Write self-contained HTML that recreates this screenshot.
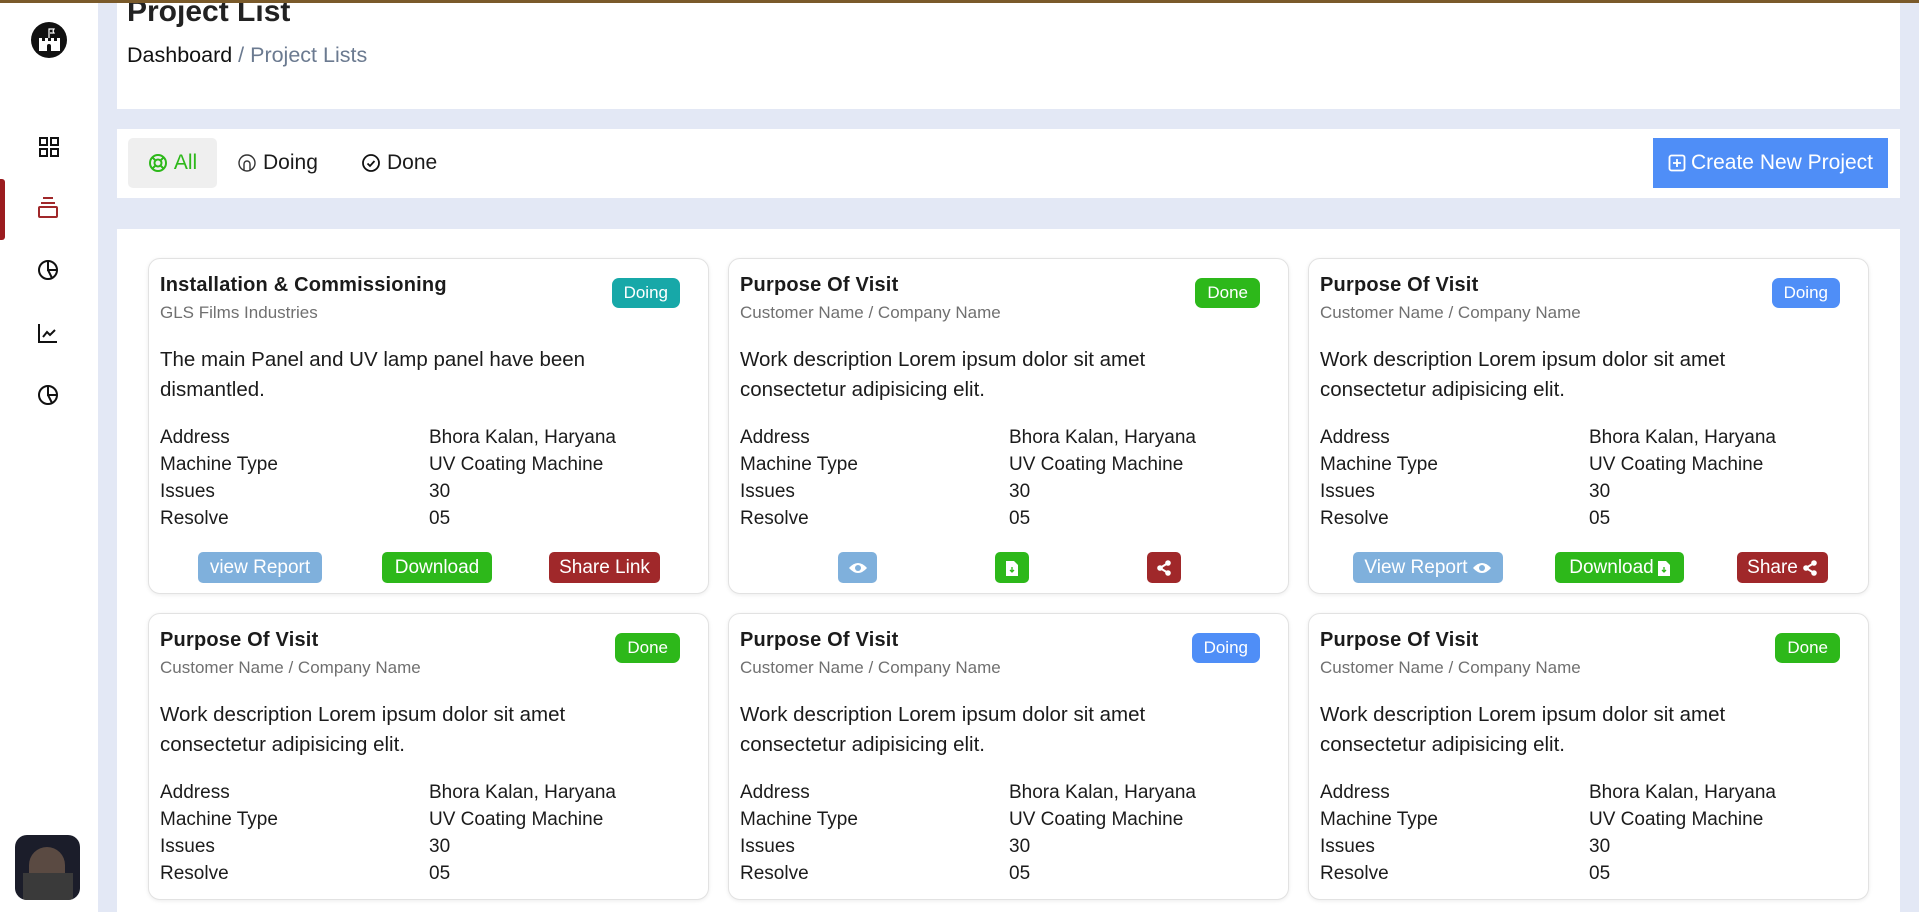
<!DOCTYPE html>
<html><head><meta charset="utf-8">
<style>
*{box-sizing:border-box;margin:0;padding:0}
html{width:1919px;height:912px;overflow:hidden}
body{width:1919px;height:912px;overflow:hidden;background:#e3e8f5;font-family:"Liberation Sans",sans-serif;color:#1b1b1b;position:relative}
.topline{position:absolute;left:0;top:0;width:1919px;height:3px;background:#7a5a2a;z-index:5}
.side{position:absolute;left:0;top:0;width:98px;height:912px;background:#fff}
.side svg{position:absolute}
.hdr{position:absolute;left:117px;top:0;width:1783px;height:109px;background:#fff}
.hdr h1{position:absolute;left:10px;top:-5px;font-size:30px;font-weight:bold;color:#222}
.hdr .bc{position:absolute;left:10px;top:43px;font-size:21.5px;color:#111}
.hdr .bc span{color:#6b7a90}
.flt{position:absolute;left:117px;top:129px;width:1783px;height:69px;background:#fff}
.tab{position:absolute;top:9px;height:50px;display:flex;align-items:center;font-size:21px;gap:6px}
.create{position:absolute;right:12px;top:9px;width:235px;height:50px;background:#4f8ef7;color:#fff;font-size:21px;display:flex;align-items:center;justify-content:center;gap:5px}
.wrap{position:absolute;left:117px;top:229px;width:1783px;height:683px;background:#fff}
.card{position:absolute;width:561px;height:336px;border:1px solid #e2e2e2;border-radius:12px;background:#fff;box-shadow:0 1px 4px rgba(0,0,0,.08)}
.card .t{position:absolute;left:11px;top:15px;font-size:20px;font-weight:bold;color:#1b1b1b;letter-spacing:0.2px}
.card .s{position:absolute;left:11px;top:44px;font-size:17px;color:#707070}
.card .d{position:absolute;left:11px;top:86px;width:500px;font-size:20.5px;line-height:30px;color:#1b1b1b}
.card table{position:absolute;left:11px;top:165px;border-collapse:collapse;font-size:19px}
.card td{height:27px;padding:0}
.card td:first-child{width:269px}
.badge{position:absolute;right:28px;top:19px;height:30px;padding:0 12px;border-radius:7px;color:#fff;font-size:17px;display:flex;align-items:center}
.btn{position:absolute;top:293px;height:31px;border-radius:5px;color:#fff;font-size:19px;display:flex;align-items:center;justify-content:center;gap:4px}
.bl{background:#7fb0dc}.gr{background:#2db81a}.rd{background:#a0282a}.tl{background:#17a8a8}.bu{background:#4f8ef7}
.r2{height:287px}
</style></head><body>
<div class="topline"></div>
<div class="side">
  <svg style="left:30px;top:21px" width="38" height="38" viewBox="0 0 38 38"><circle cx="19" cy="19" r="18" fill="#111"/><path d="M9 30V17h3v3h3v-3h3v3h3v-3h3v3h3v-3h3v13z" fill="#fff"/><path d="M17 30v-5a2 2 0 014 0v5z" fill="#111"/><path d="M19 17V8h5l-1 2 1 2h-4" stroke="#fff" stroke-width="1.2" fill="none"/></svg>
  <svg style="left:38px;top:136px" width="22" height="22" viewBox="0 0 22 22" fill="none" stroke="#111" stroke-width="2"><rect x="2" y="2" width="7" height="7"/><rect x="13" y="2" width="7" height="7"/><rect x="2" y="13" width="7" height="7"/><rect x="13" y="13" width="7" height="7"/></svg>
  <div style="position:absolute;left:0;top:179px;width:5px;height:61px;background:#9b1c1f;border-radius:0 3px 3px 0"></div>
  <svg style="left:37px;top:196px" width="22" height="24" viewBox="0 0 22 24" fill="none" stroke="#a0282a" stroke-width="2"><line x1="6" y1="2" x2="16" y2="2"/><line x1="4" y1="7" x2="18" y2="7"/><rect x="2" y="11" width="18" height="10" rx="1"/></svg>
  <svg style="left:37px;top:259px" width="22" height="22" viewBox="0 0 22 22" fill="none" stroke="#111" stroke-width="2"><circle cx="11" cy="11" r="9"/><path d="M11 2v9h9M11 11l4 8"/></svg>
  <svg style="left:37px;top:322px" width="22" height="22" viewBox="0 0 22 22" fill="none" stroke="#111" stroke-width="2"><path d="M2 2v18h18"/><path d="M6 15l4-5 3 3 5-5"/></svg>
  <svg style="left:37px;top:384px" width="22" height="22" viewBox="0 0 22 22" fill="none" stroke="#111" stroke-width="2"><circle cx="11" cy="11" r="9"/><path d="M11 2v9h9M11 11l4 8"/></svg>
  <div style="position:absolute;left:15px;top:835px;width:65px;height:65px;border-radius:12px;background:#1b1d2a;overflow:hidden"><div style="position:absolute;left:14px;top:12px;width:36px;height:53px;border-radius:18px 18px 4px 4px;background:#5a4a42"></div><div style="position:absolute;left:8px;top:38px;width:50px;height:27px;background:#3a3a3a"></div></div>
</div>
<div class="hdr"><h1>Project List</h1><div class="bc">Dashboard <span>/ Project Lists</span></div></div>
<div class="flt">
  <div class="tab" style="left:11px;width:89px;background:#efefef;border-radius:5px;justify-content:center;color:#2db81a">
    <svg width="20" height="20" viewBox="0 0 20 20" fill="none" stroke="#2db81a" stroke-width="2"><circle cx="10" cy="10" r="8"/><circle cx="10" cy="10" r="3.5"/><path d="M4.5 4.5l3 3M15.5 4.5l-3 3M4.5 15.5l3-3M15.5 15.5l-3-3"/></svg>All</div>
  <div class="tab" style="left:120px"><svg width="20" height="20" viewBox="0 0 20 20" fill="none" stroke="#333" stroke-width="1.4"><circle cx="10" cy="10" r="8"/><path d="M7 17v-6a3 3 0 016 0v6"/></svg>Doing</div>
  <div class="tab" style="left:244px"><svg width="20" height="20" viewBox="0 0 20 20" fill="none" stroke="#111" stroke-width="1.8"><circle cx="10" cy="10" r="8"/><path d="M6.5 10.5l2.5 2.5 4.5-5"/></svg>Done</div>
  <div class="create"><svg width="18" height="18" viewBox="0 0 18 18" fill="none" stroke="#fff" stroke-width="1.8"><rect x="1.5" y="1.5" width="15" height="15" rx="2"/><path d="M9 5v8M5 9h8"/></svg>Create New Project</div>
</div>
<div class="wrap"></div>

<div class="card" style="left:148px;top:258px">
<div class="t">Installation &amp; Commissioning</div><div class="s">GLS Films Industries</div>
<div class="badge tl">Doing</div>
<div class="d">The main Panel and UV lamp panel have been dismantled.</div>
<table><tr><td>Address</td><td>Bhora Kalan, Haryana</td></tr><tr><td>Machine Type</td><td>UV Coating Machine</td></tr><tr><td>Issues</td><td>30</td></tr><tr><td>Resolve</td><td>05</td></tr></table>
<div class="btn bl" style="left:49px;width:124px">view Report</div>
<div class="btn gr" style="left:233px;width:110px">Download</div>
<div class="btn rd" style="left:400px;width:111px">Share Link</div>
</div>

<div class="card" style="left:728px;top:258px">
<div class="t">Purpose Of Visit</div><div class="s">Customer Name / Company Name</div>
<div class="badge gr">Done</div>
<div class="d">Work description Lorem ipsum dolor sit amet consectetur adipisicing elit.</div>
<table><tr><td>Address</td><td>Bhora Kalan, Haryana</td></tr><tr><td>Machine Type</td><td>UV Coating Machine</td></tr><tr><td>Issues</td><td>30</td></tr><tr><td>Resolve</td><td>05</td></tr></table>
<div class="btn bl" style="left:109px;width:39px"><svg width="20" height="14" viewBox="0 0 20 14"><path d="M1 7Q10-3 19 7Q10 17 1 7z" fill="#fff"/><circle cx="10" cy="7" r="3" fill="#7fb0dc"/></svg></div>
<div class="btn gr" style="left:266px;width:34px"><svg width="12" height="16" viewBox="0 0 12 16"><path d="M0 1h8l4 4v11H0z" fill="#fff"/><path d="M6 7v5M4 10l2 2 2-2" stroke="#2db81a" stroke-width="1.3" fill="none"/></svg></div>
<div class="btn rd" style="left:418px;width:34px"><svg width="16" height="16" viewBox="0 0 16 16" fill="#fff"><circle cx="12" cy="3" r="2.8"/><circle cx="4" cy="8" r="2.8"/><circle cx="12" cy="13" r="2.8"/><path d="M4 8L12 3M4 8l8 5" stroke="#fff" stroke-width="2"/></svg></div>
</div>

<div class="card" style="left:1308px;top:258px">
<div class="t">Purpose Of Visit</div><div class="s">Customer Name / Company Name</div>
<div class="badge bu">Doing</div>
<div class="d">Work description Lorem ipsum dolor sit amet consectetur adipisicing elit.</div>
<table><tr><td>Address</td><td>Bhora Kalan, Haryana</td></tr><tr><td>Machine Type</td><td>UV Coating Machine</td></tr><tr><td>Issues</td><td>30</td></tr><tr><td>Resolve</td><td>05</td></tr></table>
<div class="btn bl" style="left:44px;width:150px">View Report <svg width="20" height="14" viewBox="0 0 20 14"><path d="M1 7Q10-3 19 7Q10 17 1 7z" fill="#fff"/><circle cx="10" cy="7" r="3" fill="#7fb0dc"/></svg></div>
<div class="btn gr" style="left:246px;width:129px">Download <svg width="12" height="16" viewBox="0 0 12 16"><path d="M0 1h8l4 4v11H0z" fill="#fff"/><path d="M6 7v5M4 10l2 2 2-2" stroke="#2db81a" stroke-width="1.3" fill="none"/></svg></div>
<div class="btn rd" style="left:428px;width:91px">Share <svg width="16" height="16" viewBox="0 0 16 16" fill="#fff"><circle cx="12" cy="3" r="2.8"/><circle cx="4" cy="8" r="2.8"/><circle cx="12" cy="13" r="2.8"/><path d="M4 8L12 3M4 8l8 5" stroke="#fff" stroke-width="2"/></svg></div>
</div>

<div class="card r2" style="left:148px;top:613px">
<div class="t">Purpose Of Visit</div><div class="s">Customer Name / Company Name</div>
<div class="badge gr">Done</div>
<div class="d">Work description Lorem ipsum dolor sit amet consectetur adipisicing elit.</div>
<table><tr><td>Address</td><td>Bhora Kalan, Haryana</td></tr><tr><td>Machine Type</td><td>UV Coating Machine</td></tr><tr><td>Issues</td><td>30</td></tr><tr><td>Resolve</td><td>05</td></tr></table>
</div>

<div class="card r2" style="left:728px;top:613px">
<div class="t">Purpose Of Visit</div><div class="s">Customer Name / Company Name</div>
<div class="badge bu">Doing</div>
<div class="d">Work description Lorem ipsum dolor sit amet consectetur adipisicing elit.</div>
<table><tr><td>Address</td><td>Bhora Kalan, Haryana</td></tr><tr><td>Machine Type</td><td>UV Coating Machine</td></tr><tr><td>Issues</td><td>30</td></tr><tr><td>Resolve</td><td>05</td></tr></table>
</div>

<div class="card r2" style="left:1308px;top:613px">
<div class="t">Purpose Of Visit</div><div class="s">Customer Name / Company Name</div>
<div class="badge gr">Done</div>
<div class="d">Work description Lorem ipsum dolor sit amet consectetur adipisicing elit.</div>
<table><tr><td>Address</td><td>Bhora Kalan, Haryana</td></tr><tr><td>Machine Type</td><td>UV Coating Machine</td></tr><tr><td>Issues</td><td>30</td></tr><tr><td>Resolve</td><td>05</td></tr></table>
</div>
</body></html>
